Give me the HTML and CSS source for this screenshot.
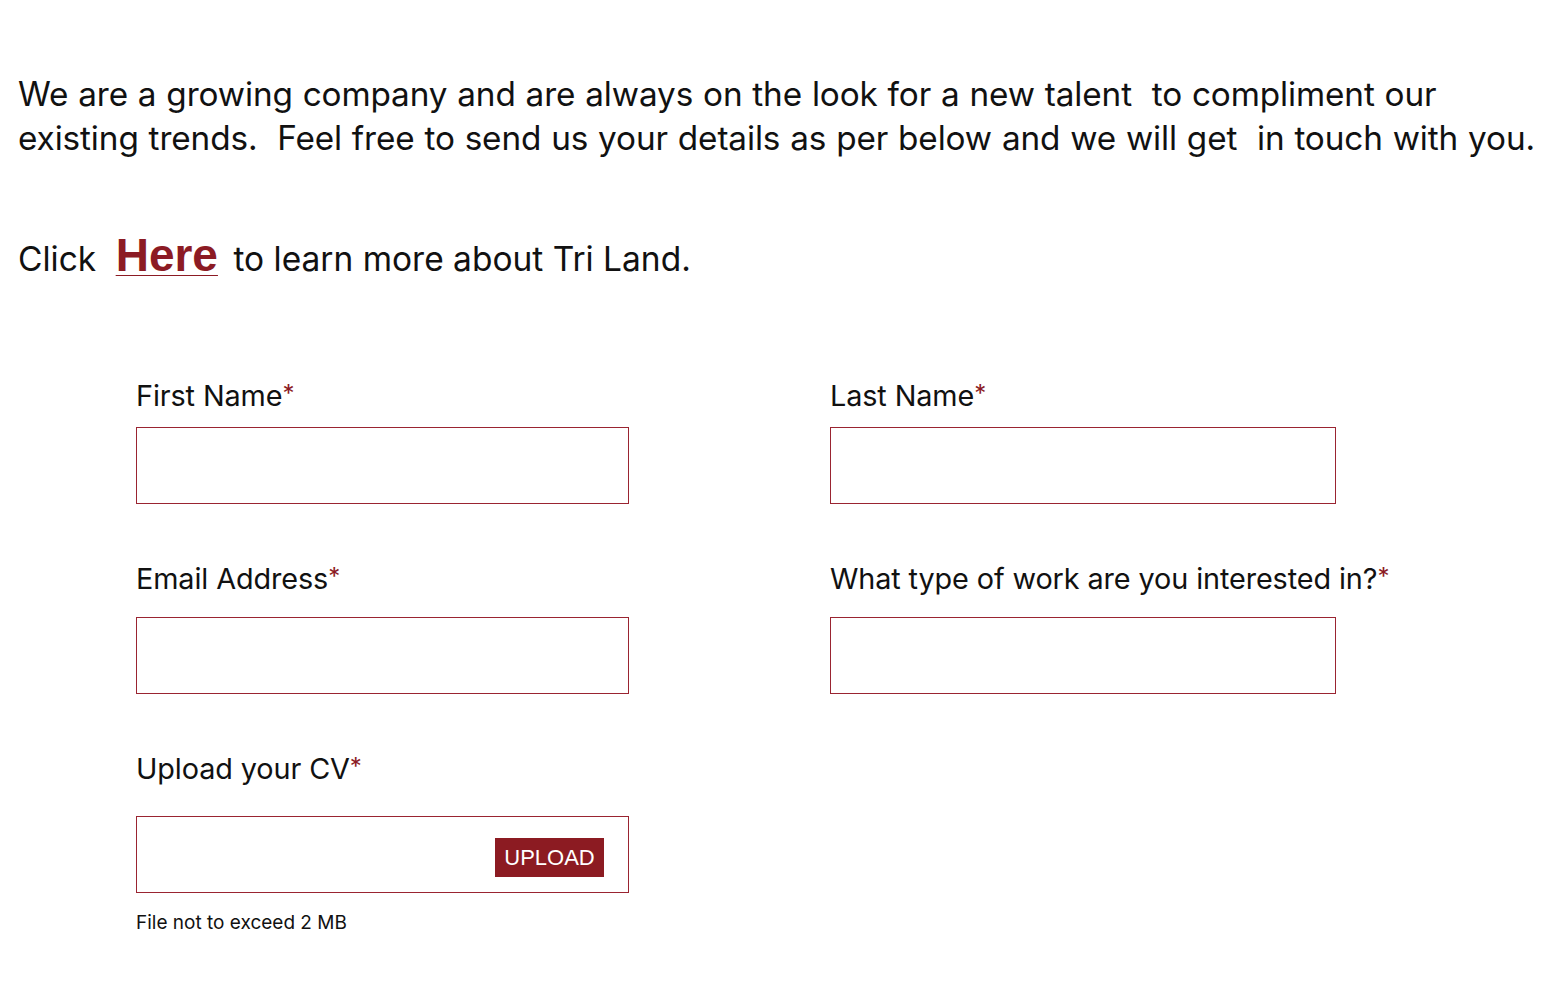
FILE: index.html
```html
<!DOCTYPE html>
<html lang="en">
<head>
<meta charset="utf-8">
<title>Careers - Tri Land</title>
<link rel="stylesheet" href="styles.css">
</head>
<body>
<main class="page">
  <p class="intro">We are a growing company and are always on the look for a new talent&nbsp; to compliment our existing trends.&nbsp; Feel free to send us your details as per below and we will get&nbsp; in touch with you.</p>
  <p class="click">Click <a class="here" href="#">Here</a> to learn more about Tri Land.</p>

  <form class="form">
    <div class="field">
      <label class="label">First Name<span class="req">*</span></label>
      <div class="input gap1"></div>
    </div>
    <div class="field wide">
      <label class="label">Last Name<span class="req">*</span></label>
      <div class="input gap1"></div>
    </div>
    <div class="field">
      <label class="label">Email Address<span class="req">*</span></label>
      <div class="input gap2"></div>
    </div>
    <div class="field wide">
      <label class="label">What type of work are you interested in?<span class="req">*</span></label>
      <div class="input gap2"></div>
    </div>
    <div class="field">
      <label class="label">Upload your CV<span class="req">*</span></label>
      <div class="input gap3 upload-box"><span class="upload">UPLOAD</span></div>
      <div class="note">File not to exceed 2 MB</div>
    </div>
  </form>
</main>
</body>
</html>
```

FILE: styles.css
```css
html, body {
  margin: 0;
  padding: 0;
  background: #ffffff;
}
body {
  font-family: Inter, "Noto Sans", sans-serif;
  color: #111111;
}
.page {
  padding: 72px 18px 40px 18px;
}
.intro {
  margin: 0;
  font-size: 33.3px;
  line-height: 44px;
  letter-spacing: -0.1px;
  word-spacing: 0.6px;
}
.click {
  margin: 73px 0 0 0;
  font-size: 33.5px;
  line-height: 44px;
  letter-spacing: 0;
}
.here {
  font-family: "Liberation Sans", Arial, sans-serif;
  font-weight: bold;
  font-size: 46px;
  color: #8c1b24;
  text-decoration: underline;
  text-decoration-thickness: 1px;
  text-underline-offset: 4px;
  margin: 0 6px 0 10px;
  letter-spacing: 0;
}
.form {
  margin: 93px 0 0 118px;
  display: grid;
  grid-template-columns: 493px 506px;
  column-gap: 201px;
  row-gap: 53px;
}
.field {
  display: flex;
  flex-direction: column;
}
.label {
  font-size: 28.8px;
  line-height: 40px;
  letter-spacing: -0.1px;
  white-space: nowrap;
}
.req {
  color: #8c1b24;
  font-size: 24px;
  vertical-align: 4px;
}
.input {
  box-sizing: border-box;
  height: 77px;
  border: 1.5px solid #9a2431;
  background: #fff;
}
.gap1 { margin-top: 11px; }
.gap2 { margin-top: 18px; }
.gap3 { margin-top: 27px; }
.upload-box {
  display: flex;
  align-items: center;
  justify-content: flex-end;
  padding: 5px 24px 0 0;
}
.upload {
  background: #8c1b22;
  color: #ffffff;
  font-family: "Liberation Sans", Arial, sans-serif;
  font-size: 22px;
  width: 109px;
  height: 39px;
  line-height: 39px;
  text-align: center;
}
.note {
  margin-top: 17px;
  font-size: 19px;
  line-height: 26px;
}
```
